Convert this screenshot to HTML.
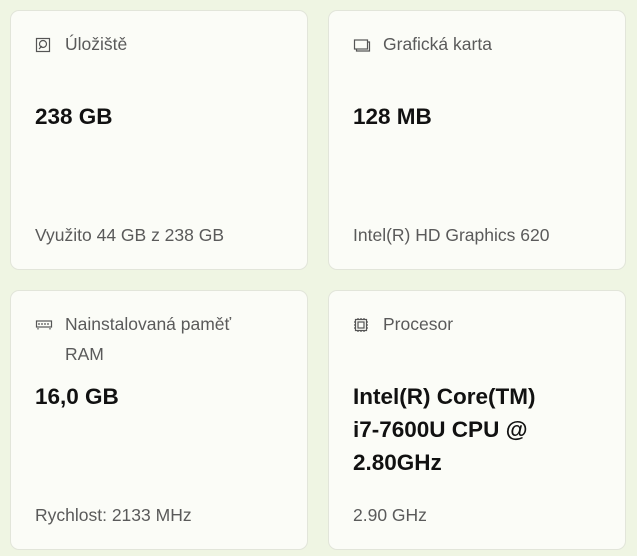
<!DOCTYPE html>
<html><head><meta charset="utf-8"><style>
body{margin:0;width:637px;height:556px;background:#eff5e3;font-family:"Liberation Sans","DejaVu Sans",sans-serif;position:relative;overflow:hidden}
.c{position:absolute;background:#fbfcf7;border:1px solid #e2e5da;border-radius:9px;box-sizing:border-box;width:298px;height:260px}
.t{position:absolute;left:54px;top:18px;font-size:17.5px;color:#5a5a5a;line-height:30px}
.i{position:absolute;left:24px;top:26px}
.v{position:absolute;left:24px;top:89px;font-size:22.5px;font-weight:bold;color:#111;line-height:33px}
.b{position:absolute;left:24px;top:212px;font-size:17.5px;color:#5a5a5a;line-height:24px}
</style></head><body>
<div class="c" style="left:10px;top:10px">
<svg class="i" width="16" height="16" viewBox="0 0 16 16" fill="none" stroke="#555" stroke-width="1.2"><rect x="1.5" y="1.5" width="13" height="13"/><circle cx="8" cy="7" r="3.5"/><path d="M7 9l-3 3"/></svg>
<div class="t">Úložiště</div><div class="v">238 GB</div><div class="b">Využito 44 GB z 238 GB</div></div>
<div class="c" style="left:328px;top:10px">
<svg class="i" width="18" height="16" viewBox="0 0 18 16" fill="none" stroke="#555" stroke-width="1.2"><rect x="1.5" y="3" width="13" height="9"/><path d="M3.5 12.5v1.5h13V5h-2"/></svg>
<div class="t">Grafická karta</div><div class="v">128 MB</div><div class="b">Intel(R) HD Graphics 620</div></div>
<div class="c" style="left:10px;top:290px">
<svg class="i" width="18" height="16" viewBox="0 0 18 16" fill="none" stroke="#555" stroke-width="1.2"><rect x="1.5" y="4" width="15" height="6"/><path d="M4 6v2M7 6v2M10 6v2M13 6v2M3 11v1.5M15 11v1.5"/></svg>
<div class="t">Nainstalovaná paměť<br>RAM</div><div class="v">16,0 GB</div><div class="b">Rychlost: 2133 MHz</div></div>
<div class="c" style="left:328px;top:290px">
<svg class="i" width="16" height="16" viewBox="0 0 16 16" fill="none" stroke="#555" stroke-width="1.2"><rect x="2.5" y="2.5" width="11" height="11"/><rect x="5" y="5" width="6" height="6"/><path d="M5 1v1.5M8 1v1.5M11 1v1.5M5 13.5V15M8 13.5V15M11 13.5V15M1 5h1.5M1 8h1.5M1 11h1.5M13.5 5H15M13.5 8H15M13.5 11H15"/></svg>
<div class="t">Procesor</div><div class="v">Intel(R) Core(TM)<br>i7-7600U CPU @<br>2.80GHz</div><div class="b">2.90 GHz</div></div>
</body></html>
